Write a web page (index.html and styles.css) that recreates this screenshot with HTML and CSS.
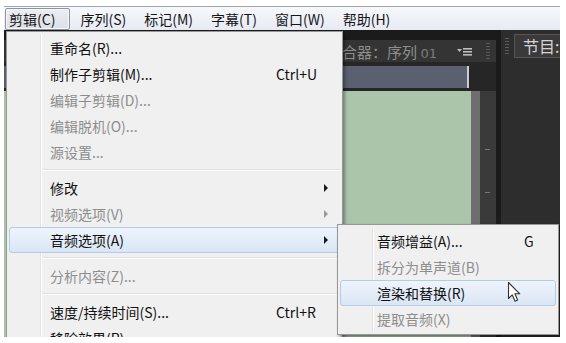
FILE: index.html
```html
<!DOCTYPE html>
<html>
<head>
    <meta charset="utf-8">
    <title>剪辑菜单</title>
    <link rel="stylesheet" href="styles.css">
</head>
<body>
    <div class="screen">
        <div class="menubar">
            <span class="mb-item active">剪辑(C)</span>
            <span class="mb-item">序列(S)</span>
            <span class="mb-item">标记(M)</span>
            <span class="mb-item">字幕(T)</span>
            <span class="mb-item">窗口(W)</span>
            <span class="mb-item">帮助(H)</span>
        </div>
        <div class="workspace">
            <div class="mixer">
                <div class="panel-head">
                    <span class="panel-title">音轨混合器：序列 <span class="num">01</span></span>
                    <svg class="panel-menu" width="16" height="9" viewBox="0 0 16 9">
                        <path d="M0 2 L5 2 L2.5 5 Z" fill="#bdbdbd"/>
                        <rect x="6" y="1" width="9" height="1.6" fill="#bdbdbd"/>
                        <rect x="6" y="4" width="9" height="1.6" fill="#bdbdbd"/>
                        <rect x="6" y="7" width="9" height="1.6" fill="#bdbdbd"/>
                    </svg>
                    <span class="grip"></span>
                </div>
                <div class="mixer-body">
                    <div class="track-area">
                        <div class="track-bar"></div>
                        <div class="track-green"></div>
                    </div>
                    <div class="meter-col">
                        <i></i>
                        <i></i>
                    </div>
                </div>
            </div>
            <div class="program">
                <div class="program-head">
                    <span class="grip"></span>
                    <span class="program-title">节目:</span>
                </div>
            </div>
        </div>

        <!-- 剪辑 下拉菜单 -->
        <div class="menu main-menu">
            <div class="mi"><span class="label">重命名(R)...</span></div>
            <div class="mi"><span class="label">制作子剪辑(M)...</span><span class="key">Ctrl+U</span></div>
            <div class="mi off"><span class="label">编辑子剪辑(D)...</span></div>
            <div class="mi off"><span class="label">编辑脱机(O)...</span></div>
            <div class="mi off"><span class="label">源设置...</span></div>
            <div class="sep"></div>
            <div class="mi"><span class="label">修改</span><span class="arrow"></span></div>
            <div class="mi off"><span class="label">视频选项(V)</span><span class="arrow"></span></div>
            <div class="mi hover"><span class="label">音频选项(A)</span><span class="arrow"></span></div>
            <div class="sep"></div>
            <div class="mi off"><span class="label">分析内容(Z)...</span></div>
            <div class="sep"></div>
            <div class="mi"><span class="label">速度/持续时间(S)...</span><span class="key">Ctrl+R</span></div>
            <div class="mi"><span class="label">移除效果(R)...</span></div>
        </div>

        <!-- 音频选项 子菜单 -->
        <div class="menu sub-menu">
            <div class="mi"><span class="label">音频增益(A)...</span><span class="key">G</span></div>
            <div class="mi off"><span class="label">拆分为单声道(B)</span></div>
            <div class="mi hover"><span class="label">渲染和替换(R)</span></div>
            <div class="mi off"><span class="label">提取音频(X)</span></div>
        </div>

        <svg class="cursor" width="14" height="22" viewBox="0 0 14 22">
            <path d="M1.5 1.5 L1.5 17.5 L5.2 13.8 L8 20.2 L10.6 19 L7.9 12.8 L12.8 12.8 Z" fill="#fff" stroke="#333" stroke-width="1.1" stroke-linejoin="round"/>
        </svg>
    </div>
</body>
</html>
```

FILE: styles.css
```css
html, body {
    margin: 0;
    padding: 0;
    background: #fff;
}
body {
    font-family: "Noto Sans CJK SC", "Noto Sans", sans-serif;
}
.screen {
    position: relative;
    width: 556px;
    height: 331px;
    margin: 6px 0 0 4px;
    border-top: 1px solid #a4a6ad;
    box-sizing: border-box;
    overflow: hidden;
    background: #1b1b1b;
}

/* 菜单栏 */
.menubar {
    display: flex;
    align-items: center;
    height: 23px;
    padding-left: 1px;
    background: linear-gradient(#f7f8fc, #e7eaf4);
}
.mb-item {
    font-size: 14px;
    line-height: 20px;
    color: #151515;
    padding: 0 7px 0 3px;
    margin-right: 6px;
    border: 1px solid transparent;
    border-radius: 2px;
}
.mb-item.active {
    padding-right: 14px;
    border-color: #8a94a6;
    background: linear-gradient(#eceef3, #dcdfe7);
    box-shadow: inset 0 0 0 1px #f7f8fb;
}

/* 工作区 */
.workspace {
    display: flex;
    height: 307px;
    background: #1b1b1b;
}
.mixer {
    width: 492px;
    padding-top: 10px;
}
.panel-head {
    display: flex;
    align-items: center;
    justify-content: flex-end;
    height: 22px;
    background: #343434;
    padding-right: 6px;
}
.panel-title {
    font-size: 15px;
    color: #8e8e8e;
    margin-right: 20px;
}
.panel-title .num {
    font-family: "DejaVu Sans", sans-serif;
    font-size: 13px;
    color: #7c7c7c;
}
.panel-menu {
    margin-right: 13px;
}
.grip {
    width: 4px;
    height: 16px;
    background: repeating-linear-gradient(#5a5a5a 0 1px, transparent 1px 3px);
}
.mixer-body {
    display: flex;
    height: 275px;
    padding-top: 4px;
    background: #262626;
}
.track-area {
    display: flex;
    flex-direction: column;
    width: 467px;
}
.track-bar {
    height: 22px;
    margin-right: 2px;
    background: #5b6071;
    border-right: 2px solid #c9ccd3;
}
.track-green {
    flex: 1;
    margin-top: 3px;
    background: #abc5aa;
}
.meter-col {
    flex: 1;
    display: flex;
    flex-direction: column;
    align-items: center;
    gap: 42px;
    padding-top: 58px;
    margin-top: 25px;
    background: linear-gradient(90deg, #6e6e6e 0 9px, #3a3a3a 9px);
}
.meter-col i {
    display: block;
    width: 5px;
    height: 1px;
    margin-left: 8px;
    background: #777;
}
.program {
    flex: 1;
    margin-left: 5px;
    background: #2d2d2d;
}
.program-head {
    display: flex;
    align-items: center;
    gap: 5px;
    height: 26px;
    padding: 3px 0 0 4px;
}
.program-title {
    flex: 1;
    height: 22px;
    line-height: 22px;
    padding-left: 8px;
    font-size: 16px;
    color: #d4d4d4;
    background: #3a3a3a;
    border: 1px solid #555;
    border-right: none;
}

/* 下拉菜单 */
.menu {
    position: absolute;
    background: #f0f0f0;
    border: 1px solid #979797;
    box-sizing: border-box;
    font-size: 14px;
}
.menu::before {
    content: '';
    position: absolute;
    top: 2px;
    bottom: 2px;
    width: 1px;
    background: #e2e3e3;
    box-shadow: 1px 0 0 #fff;
}
.main-menu {
    left: 2px;
    top: 24px;
    width: 337px;
    padding: 3px 2px 0;
    box-shadow: 2px 2px 3px rgba(0, 0, 0, 0.35);
}
.main-menu::before {
    left: 33px;
}
.sub-menu {
    left: 333px;
    top: 217px;
    width: 222px;
    padding: 3px 2px 2px;
    box-shadow: 2px 2px 3px rgba(0, 0, 0, 0.45);
}
.sub-menu::before {
    left: 34px;
}
.mi {
    position: relative;
    display: flex;
    align-items: center;
    height: 26px;
    padding-left: 40px;
    color: #111;
    border: 1px solid transparent;
    border-radius: 3px;
    box-sizing: border-box;
}
.sub-menu .mi {
    padding-left: 36px;
}
.mi.off {
    color: #8d8d8d;
}
.mi.hover {
    border-color: #b4cbe8;
    background: linear-gradient(#eef4fc, #dae6f5);
}
.mi .label {
    flex-shrink: 0;
    width: 226px;
}
.sub-menu .mi .label {
    width: 147px;
}
.mi .key {
    width: 48px;
}
.sub-menu .mi .key {
    width: auto;
}
.mi .arrow {
    margin-left: 48px;
    width: 0;
    height: 0;
    border-top: 4px solid transparent;
    border-bottom: 4px solid transparent;
    border-left: 4px solid #1a1a1a;
}
.mi.off .arrow {
    border-left-color: #9a9a9a;
}
.sep {
    height: 10px;
    margin-left: 32px;
    background: linear-gradient(transparent 4px, #e0e0e0 4px 5px, #fff 5px 6px, transparent 6px);
}
.cursor {
    position: absolute;
    left: 503px;
    top: 274px;
}
```
